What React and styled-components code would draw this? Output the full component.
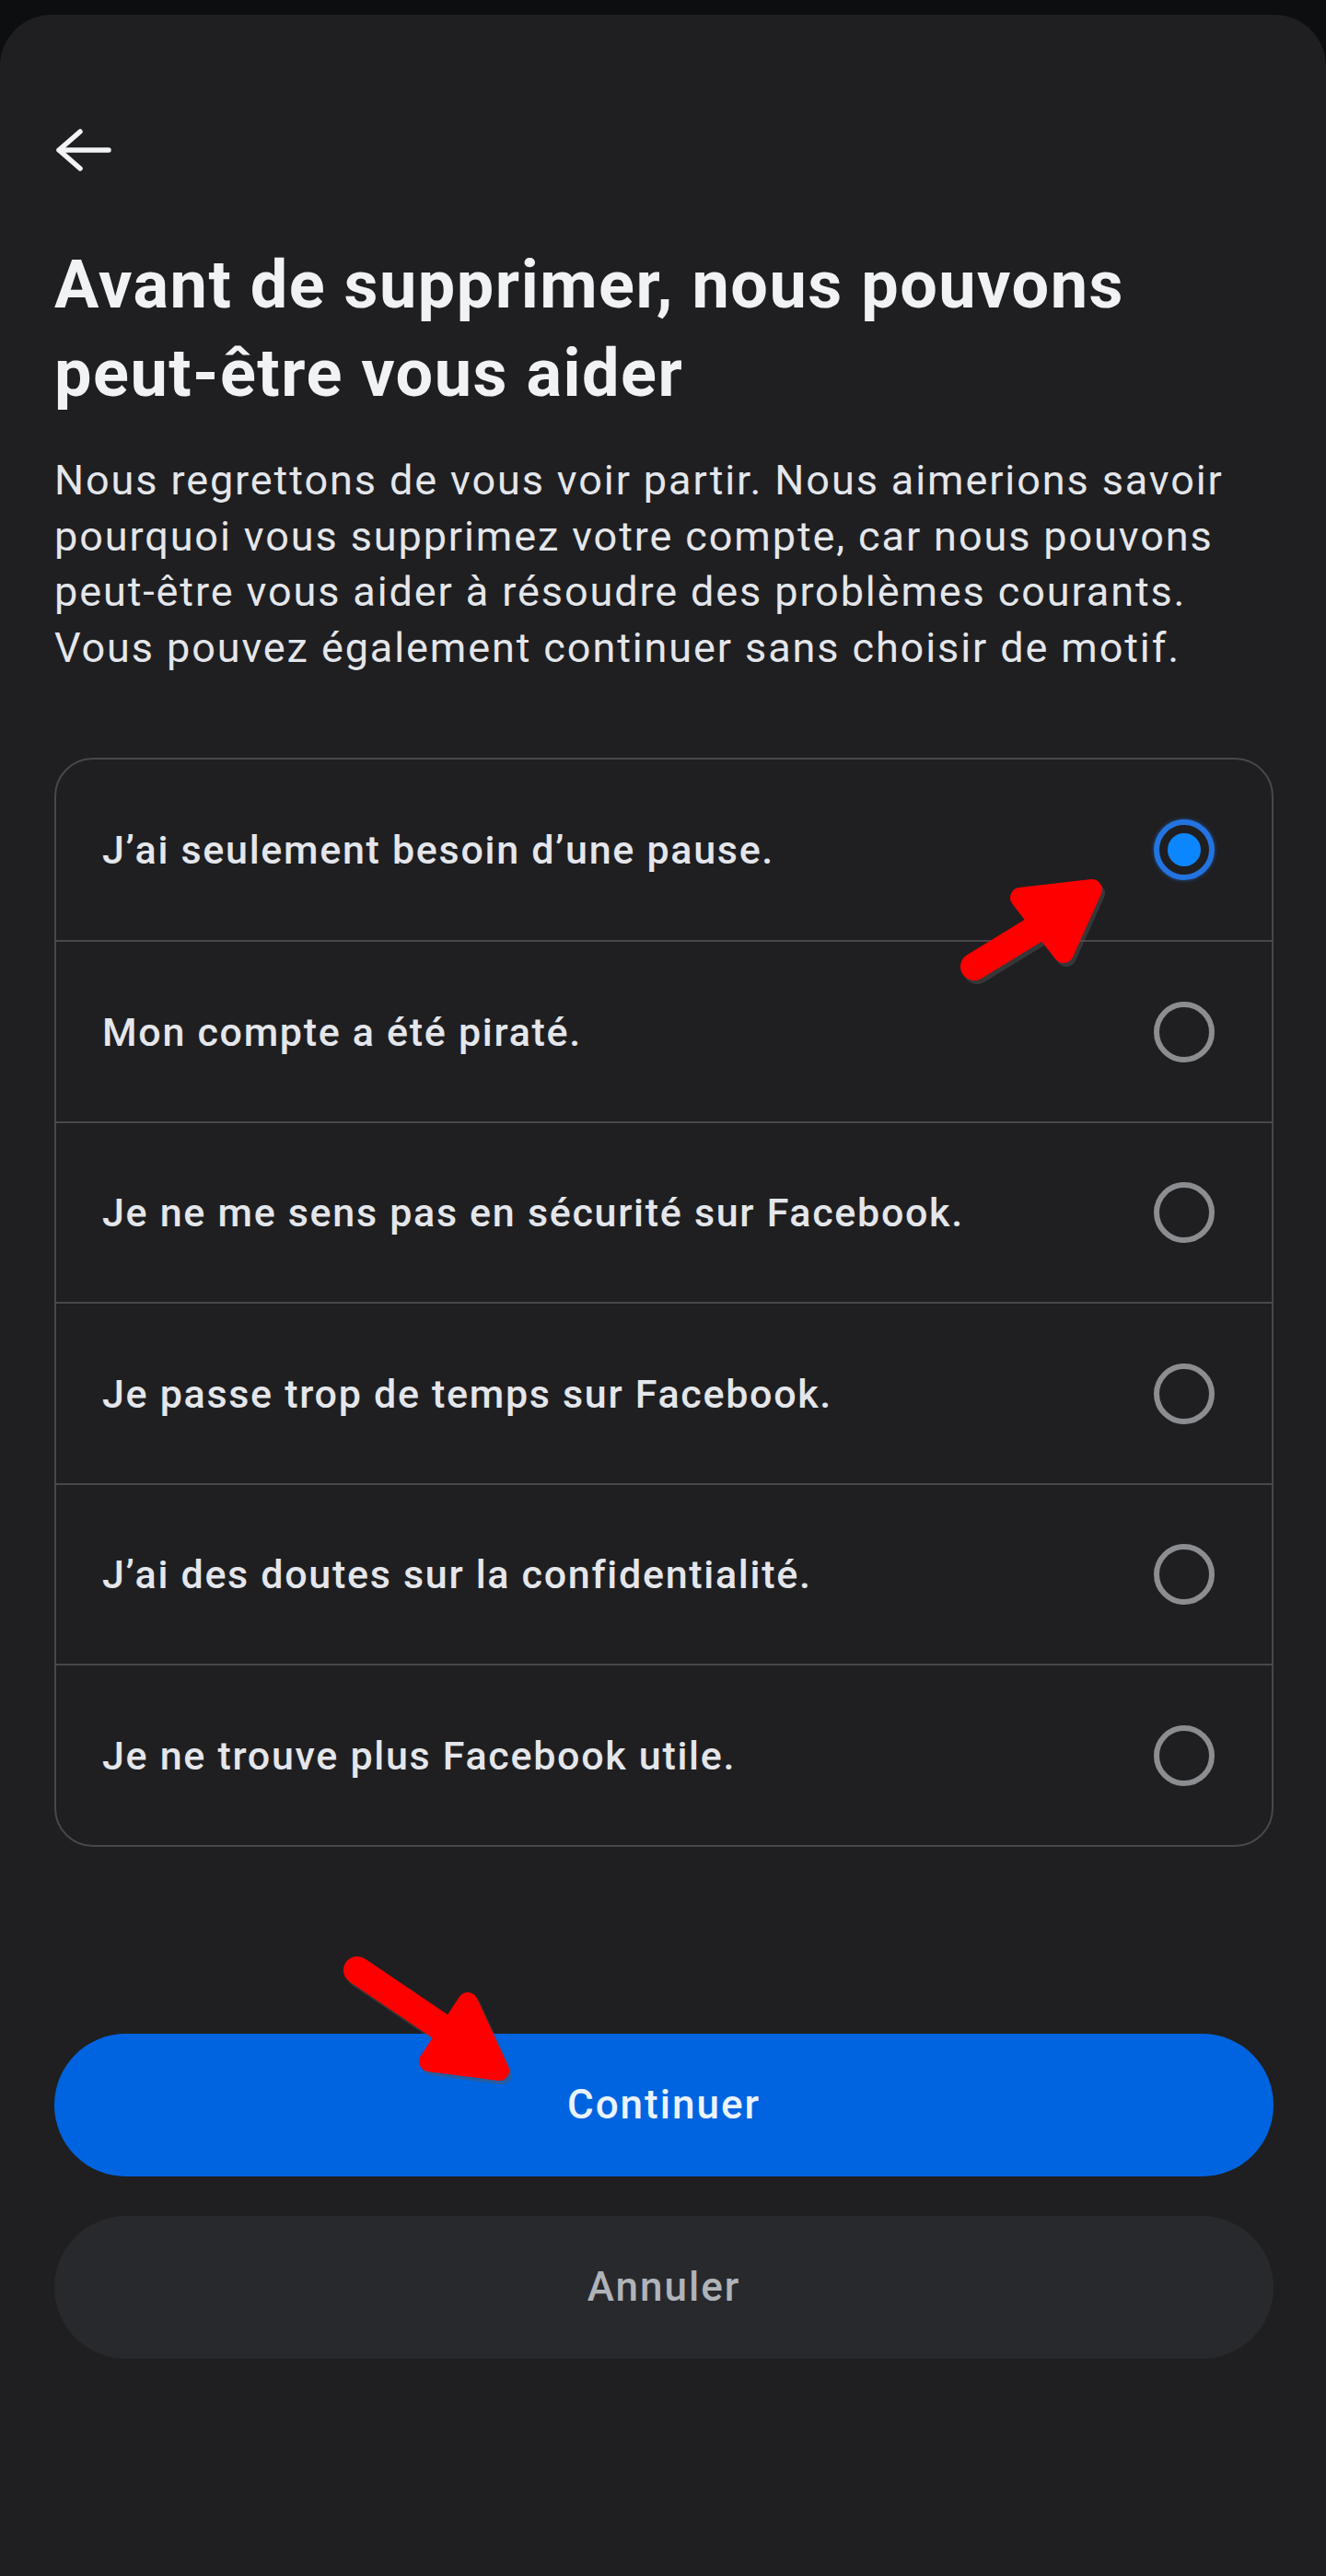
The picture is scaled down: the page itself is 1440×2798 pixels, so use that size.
import React, { useState } from "react";
import styled, { createGlobalStyle } from "styled-components";

const GlobalStyle = createGlobalStyle`
  html, body { margin: 0; padding: 0; background: #0d0e10; }
  * { box-sizing: border-box; }
`;

const Page = styled.div`
  position: relative;
  width: 1440px;
  min-height: 2798px;
  padding-top: 16px;
  background: #0d0e10;
  font-family: Roboto, "Liberation Sans", sans-serif;
`;

const Sheet = styled.div`
  min-height: 2782px;
  background: #1f1f21;
  border-radius: 56px 56px 0 0;
  padding: 0 57px 0 59px;
  display: flex;
  flex-direction: column;
`;

const BackButton = styled.button`
  margin-top: 117px;
  width: 64px;
  height: 60px;
  padding: 0;
  border: none;
  background: transparent;
  display: flex;
  align-items: center;
  justify-content: flex-start;
  cursor: pointer;
`;

const Title = styled.h1`
  margin: 69px 0 0;
  font-size: 72px;
  line-height: 96px;
  font-weight: 700;
  color: #f1f2f4;
  letter-spacing: 1.5px;
`;

const Intro = styled.p`
  margin: 38px 0 0;
  font-size: 45px;
  line-height: 60.7px;
  font-weight: 400;
  color: #e4e6eb;
  letter-spacing: 1.9px;
  white-space: nowrap;
`;

const List = styled.div`
  margin-top: 88px;
  border: 2px solid #47484c;
  border-radius: 42px;
  display: flex;
  flex-direction: column;
  overflow: hidden;
`;

const Row = styled.label`
  height: 196.5px;
  display: flex;
  align-items: center;
  justify-content: space-between;
  padding: 0 62px 0 50px;
  border-top: ${(p) => (p.$first ? "none" : "2px solid #47484c")};
  cursor: pointer;
`;

const RowText = styled.span`
  font-size: 43px;
  font-weight: 500;
  letter-spacing: 1.7px;
  color: #e4e6eb;
`;

const Radio = styled.span`
  width: 66px;
  height: 66px;
  border-radius: 50%;
  border: 6px solid ${(p) => (p.$checked ? "#2374e1" : "#8b8d91")};
  box-shadow: ${(p) => (p.$checked ? "0 0 4px rgba(35,116,225,0.6)" : "none")};
  display: flex;
  align-items: center;
  justify-content: center;
  flex-shrink: 0;
  &::after {
    content: "";
    width: 36px;
    height: 36px;
    border-radius: 50%;
    background: #0c86ff;
    display: ${(p) => (p.$checked ? "block" : "none")};
  }
`;

const Actions = styled.div`
  margin-top: 203px;
  display: flex;
  flex-direction: column;
  gap: 43px;
`;

const Button = styled.button`
  height: 155px;
  border: none;
  border-radius: 78px;
  font-family: Roboto, "Liberation Sans", sans-serif;
  font-size: 44px;
  font-weight: 500;
  letter-spacing: 2px;
  background: ${(p) => (p.$primary ? "#0064e0" : "#28292d")};
  color: ${(p) => (p.$primary ? "#eaf3ff" : "#b0b3b8")};
  cursor: pointer;
`;

const Overlay = styled.svg`
  position: absolute;
  left: 0;
  top: 0;
  pointer-events: none;
`;

const reasons = [
  "J’ai seulement besoin d’une pause.",
  "Mon compte a été piraté.",
  "Je ne me sens pas en sécurité sur Facebook.",
  "Je passe trop de temps sur Facebook.",
  "J’ai des doutes sur la confidentialité.",
  "Je ne trouve plus Facebook utile.",
];

function RedArrow({ tail, tip, left, right }) {
  const mid = [(left[0] + right[0]) / 2, (left[1] + right[1]) / 2];
  const pts = `${tip[0]},${tip[1]} ${left[0]},${left[1]} ${right[0]},${right[1]}`;
  return (
    <g>
      <g transform="translate(3,4)" opacity="0.45">
        <line x1={tail[0]} y1={tail[1]} x2={mid[0]} y2={mid[1]} stroke="#555" strokeWidth="30" strokeLinecap="round" />
        <polygon points={pts} fill="#555" stroke="#555" strokeWidth="22" strokeLinejoin="round" />
      </g>
      <line x1={tail[0]} y1={tail[1]} x2={mid[0]} y2={mid[1]} stroke="#ff0000" strokeWidth="30" strokeLinecap="round" />
      <polygon points={pts} fill="#ff0000" stroke="#ff0000" strokeWidth="22" strokeLinejoin="round" />
    </g>
  );
}

export default function App() {
  const [selected, setSelected] = useState(0);
  return (
    <Page>
      <GlobalStyle />
      <Sheet>
        <BackButton aria-label="Retour">
          <svg width="62" height="46" viewBox="0 0 62 46">
            <path d="M28 3 L5 23 L28 43 M5 23 H59" fill="none" stroke="#f2f3f5" strokeWidth="5.5" strokeLinecap="round" strokeLinejoin="round" />
          </svg>
        </BackButton>
        <Title>
          Avant de supprimer, nous pouvons
          <br />
          peut-être vous aider
        </Title>
        <Intro>
          Nous regrettons de vous voir partir. Nous aimerions savoir
          <br />
          pourquoi vous supprimez votre compte, car nous pouvons
          <br />
          peut-être vous aider à résoudre des problèmes courants.
          <br />
          Vous pouvez également continuer sans choisir de motif.
        </Intro>
        <List>
          {reasons.map((r, i) => (
            <Row key={r} $first={i === 0} onClick={() => setSelected(i)}>
              <RowText>{r}</RowText>
              <Radio $checked={selected === i} />
            </Row>
          ))}
        </List>
        <Actions>
          <Button $primary>Continuer</Button>
          <Button>Annuler</Button>
        </Actions>
      </Sheet>
      <Overlay width="1440" height="2798" viewBox="0 0 1440 2798">
        <RedArrow tail={[1058, 1050]} tip={[1186, 966]} left={[1108, 975]} right={[1155, 1035]} />
        <RedArrow tail={[388, 2140]} tip={[542, 2249]} left={[508, 2175]} right={[466, 2239]} />
      </Overlay>
    </Page>
  );
}
